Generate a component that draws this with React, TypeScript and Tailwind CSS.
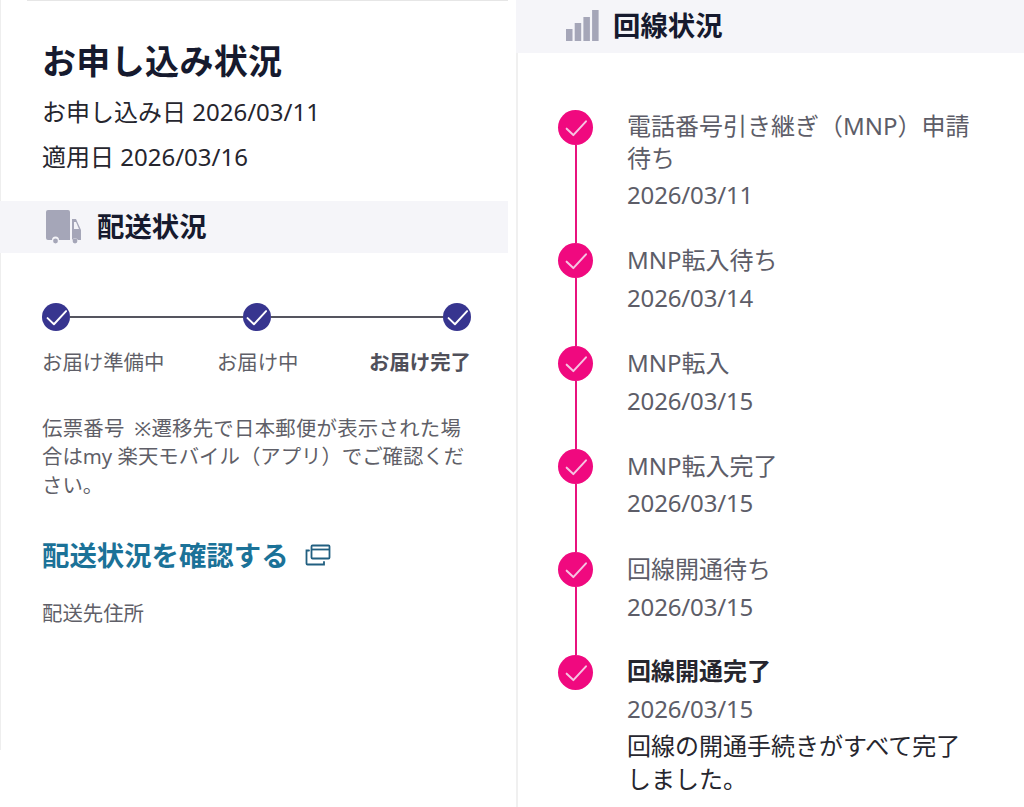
const FONT = 'font-["Noto_Sans","Noto_Sans_CJK_JP",sans-serif]';

const lineSteps = [
  { title: ['電話番号引き継ぎ（MNP）申請', '待ち'], date: '2026/03/11', top: 'pt-0', dateGap: 'mt-[5px]' },
  { title: ['MNP転入待ち'], date: '2026/03/14', top: 'pt-[1px]', dateGap: 'mt-[6px]' },
  { title: ['MNP転入'], date: '2026/03/15', top: 'pt-[1px]', dateGap: 'mt-[6px]' },
  { title: ['MNP転入完了'], date: '2026/03/15', top: 'pt-[1px]', dateGap: 'mt-[5px]' },
  { title: ['回線開通待ち'], date: '2026/03/15', top: 'pt-[1px]', dateGap: 'mt-[6px]' },
];

const Check = ({ className }: { className: string }) => (
  <svg viewBox="3 3 18 18" fill="none" stroke="currentColor" strokeWidth={1.5} className={className}>
    <path d="M5 12.5l5 4.8L19.5 7" strokeLinecap="round" strokeLinejoin="round" />
  </svg>
);

const Truck = () => (
  <svg viewBox="0 0 36 34" className="w-[36px] h-[34px]" fill="#a5a6b8">
    <path d="M2 0h20a2 2 0 0 1 2 2v28H13a3.5 3.5 0 0 0-7 0H2a2 2 0 0 1-2-2V2a2 2 0 0 1 2-2z" />
    <path d="M26 9h4l5 11v10h-3a3.5 3.5 0 0 0-6 0V9z" />
    <circle cx="9.5" cy="31" r="2.4" />
    <circle cx="29" cy="31" r="2.4" />
    <path d="M28 12h2l3 7h-5z" fill="#f4f4f8" />
  </svg>
);

const Bars = () => (
  <svg viewBox="0 0 33 31" className="w-[33px] h-[31px] -mt-[3px]" fill="#a5a6b8">
    <rect x="0" y="19" width="6.5" height="12" />
    <rect x="8.7" y="13" width="6.5" height="18" />
    <rect x="17.4" y="7" width="6.5" height="24" />
    <rect x="26.1" y="0" width="6.5" height="31" />
  </svg>
);

const ExternalWindow = () => (
  <svg viewBox="0 0 26 22" className="w-[26px] h-[22px] -mt-[2px]" fill="none" stroke="#215f80" strokeWidth={1.8}>
    <rect x="6.5" y="1.5" width="18" height="13" rx="1" />
    <path d="M6.5 5.5h18" />
    <path d="M4 6.5H1.5v13a1 1 0 0 0 1 1H19v-2.5" strokeLinecap="round" />
  </svg>
);

const DeliveryDot = () => (
  <div className="w-[28px] h-[28px] rounded-full bg-[#37358f] text-white flex items-center justify-center shrink-0">
    <Check className="w-[23px] h-[23px]" />
  </div>
);

const PinkDot = () => (
  <div className="w-[35px] h-[35px] rounded-full bg-[#f0097f] text-[#f6c3e2] flex items-center justify-center shrink-0">
    <Check className="w-[24px] h-[24px]" />
  </div>
);

export default function App() {
  return (
    <div className={`w-[1024px] h-[807px] overflow-hidden bg-white flex ${FONT}`}>
      {/* Left column */}
      <div className="w-[508px] shrink-0 h-[750px] border-l border-[#eeeeee]">
        <div className="ml-[26px] h-px bg-[#e6e6e6]" />
        <div className="pl-[41px] pt-[38px] h-[200px]">
          <h1 className="text-[34px] leading-[44px] font-bold text-[#161a2e] tracking-[0.35px]">お申し込み状況</h1>
          <p className="text-[24px] leading-[34px] text-[#26262e] mt-[12px]">お申し込み日 2026/03/11</p>
          <p className="text-[24px] leading-[34px] text-[#26262e] mt-[11px]">適用日 2026/03/16</p>
        </div>
        <div className="-ml-px h-[52px] bg-[#f5f5f9] flex items-center pl-[46px] gap-[15px]">
          <Truck />
          <span className="text-[27.4px] font-bold text-[#161a2e]">配送状況</span>
        </div>

        <div className="pl-[41px] pr-[37px] pt-[50px]">
          <div className="flex items-center">
            <DeliveryDot />
            <div className="flex-1 h-[2px] bg-[#55555f]" />
            <DeliveryDot />
            <div className="flex-1 h-[2px] bg-[#55555f]" />
            <DeliveryDot />
          </div>
          <div className="flex justify-between mt-[16px] text-[20.4px] leading-[30px] text-[#5f5f68]">
            <span>お届け準備中</span>
            <span className="pr-[18px]">お届け中</span>
            <span className="font-bold text-[#50505a]">お届け完了</span>
          </div>
          <p className="mt-[37px] text-[20.4px] leading-[28.4px] text-[#5f5f68] w-[430px]">
            <span className="tracking-[0.25px]">伝票番号<span className="pl-[4px]"> </span>※遷移先で日本郵便が表示された場</span>合はmy 楽天モバイル（アプリ）でご確認ください。
          </p>
          <div className="mt-[37px] flex items-center gap-[16px]">
            <span className="text-[27.4px] leading-[40px] font-bold text-[#1b7298]">配送状況を確認する</span>
            <ExternalWindow />
          </div>
          <p className="mt-[22px] text-[20.4px] leading-[30px] text-[#5f5f68]">配送先住所</p>
        </div>
      </div>

      {/* Right column */}
      <div className="ml-[8px] flex-1 border-l-2 border-[#f0f0f0]">
        <div className="-ml-[2px] h-[53px] bg-[#f5f5f9] flex items-center pl-[50px] gap-[14px]">
          <Bars />
          <span className="text-[27.4px] font-bold text-[#161a2e] -mt-[2px]">回線状況</span>
        </div>

        <div className="pl-[40px] pt-[57px]">
          {lineSteps.map((step) => (
            <div key={step.date + step.title[0]} className="flex">
              <div className="flex flex-col items-center w-[35px] shrink-0">
                <PinkDot />
                <div className="w-[2px] flex-1 bg-[#e8137e]" />
              </div>
              <div className={`ml-[34px] ${step.top} text-[24px] leading-[32px] text-[#5d5d68] ${step.title.length > 1 ? 'h-[133px]' : 'h-[103px]'}`}>
                {step.title.map((line) => (
                  <div key={line}>{line}</div>
                ))}
                <div className={`${step.dateGap} tracking-[-0.15px]`}>{step.date}</div>
              </div>
            </div>
          ))}
          <div className="flex">
            <PinkDot />
            <div className="ml-[34px] text-[24px] leading-[32px]">
              <div className="font-bold text-[#26262e]">回線開通完了</div>
              <div className="mt-[6px] text-[#5d5d68] tracking-[-0.15px]">2026/03/15</div>
              <div className="text-[#26262e] w-[350px] mt-[4px] leading-[33px]">回線の開通手続きがすべて完了しました。</div>
            </div>
          </div>
        </div>
      </div>
    </div>
  );
}
